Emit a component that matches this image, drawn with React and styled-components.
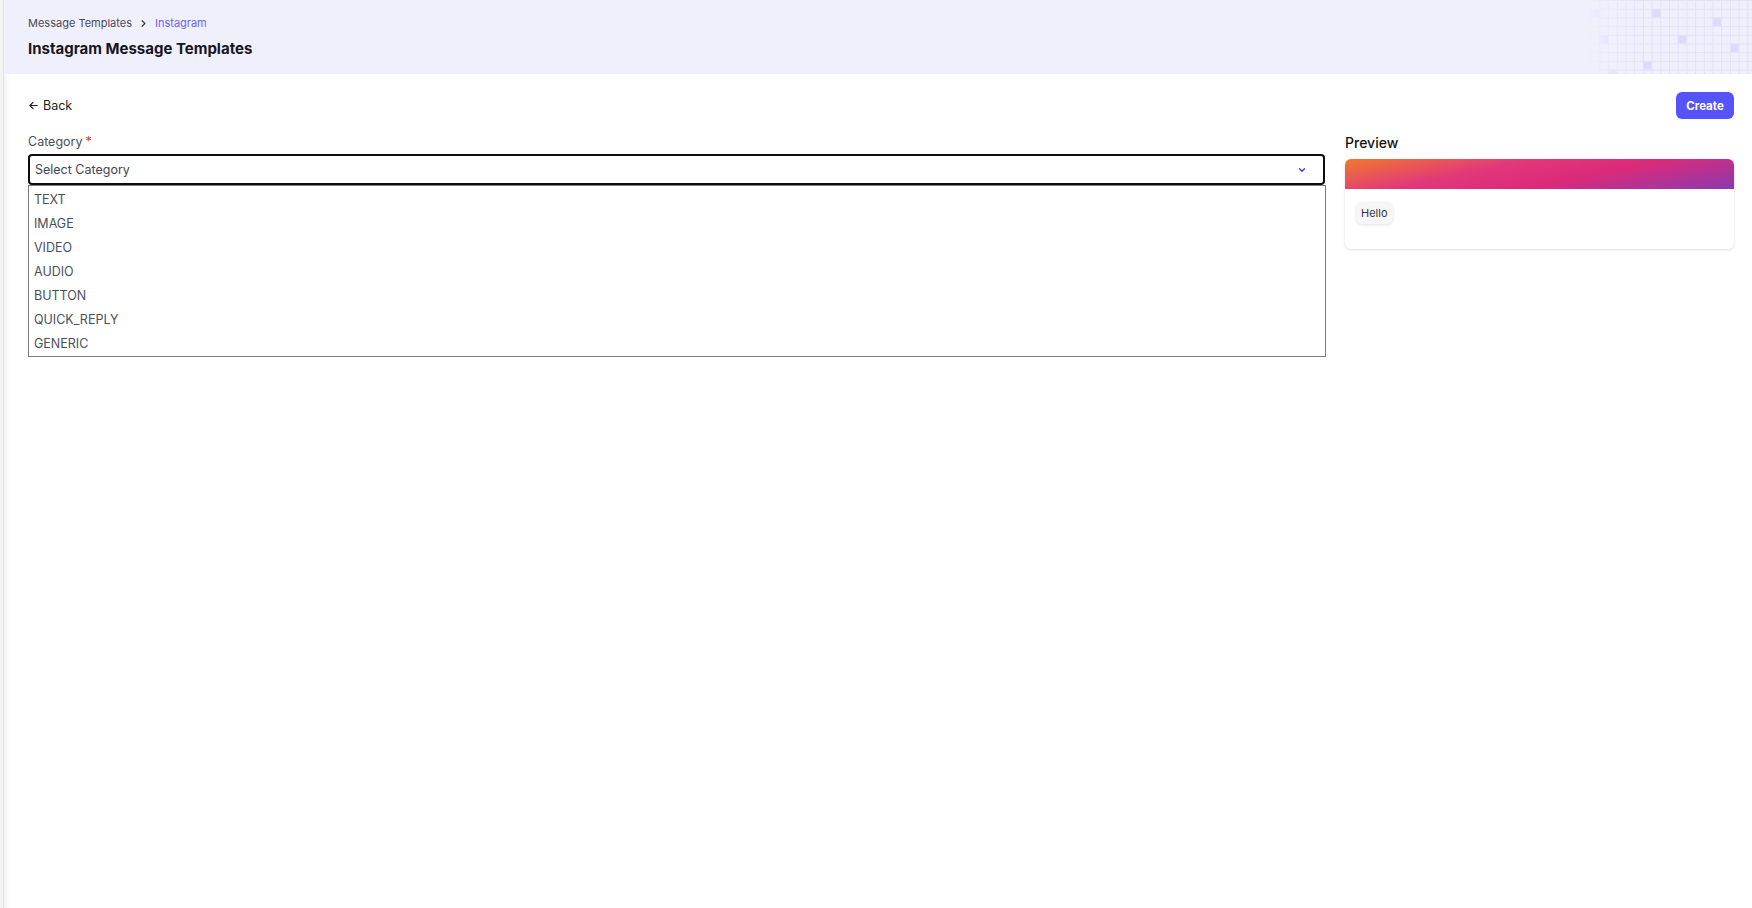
import React from "react";
import styled, { createGlobalStyle } from "styled-components";

const Global = createGlobalStyle`
  html, body { margin: 0; padding: 0; background: #ffffff; }
  body { font-family: Inter, "Noto Sans", "Liberation Sans", sans-serif; color: #1f2024; }
  * { box-sizing: border-box; }
`;

const Shell = styled.div`
  display: flex;
  min-height: 908px;
`;

const Rail = styled.div`
  width: 4px;
  flex: none;
  background: #f3f3f4;
  border-right: 1px solid #e4e4e6;
`;

const Main = styled.div`
  flex: 1;
  display: flex;
  flex-direction: column;
  background: #fff;
  box-shadow: inset 6px 0 6px -5px rgba(0, 0, 0, 0.08);
`;

const Header = styled.header`
  position: relative;
  height: 74px;
  background: #f0f0fd;
  padding: 16px 24px 0 24px;
  overflow: hidden;
`;

const Crumbs = styled.nav`
  display: flex;
  align-items: center;
  gap: 6px;
  font-size: 11px;
  line-height: 15px;
`;

const Crumb = styled.span`
  color: ${(p) => (p.$active ? "#6c63f6" : "#4a4a55")};
`;

const Title = styled.h1`
  margin: 8px 0 0;
  font-size: 15px;
  line-height: 20px;
  font-weight: 700;
  color: #16161f;
`;

const GridArt = styled.svg`
  position: absolute;
  right: 0;
  top: 0;
  -webkit-mask-image: linear-gradient(to right, transparent 0%, #000 35%);
  mask-image: linear-gradient(to right, transparent 0%, #000 35%);
`;

const Content = styled.div`
  padding: 18px 18px 0 24px;
`;

const TopRow = styled.div`
  display: flex;
  align-items: center;
  justify-content: space-between;
  height: 27px;
`;

const BackLink = styled.a`
  display: flex;
  align-items: center;
  gap: 4px;
  font-size: 12.5px;
  color: #1c1c22;
  text-decoration: none;
  cursor: pointer;
`;

const PrimaryButton = styled.button`
  height: 27px;
  width: 58px;
  border: none;
  border-radius: 6px;
  background: #5653fb;
  color: #fff;
  font-family: inherit;
  font-size: 11.5px;
  font-weight: 700;
  cursor: pointer;
`;

const Columns = styled.div`
  display: grid;
  grid-template-columns: 1fr 389px;
  gap: 20px;
  margin-top: 14px;
  align-items: start;
`;

const Field = styled.div`
  display: flex;
  flex-direction: column;
`;

const Label = styled.label`
  font-size: 12.5px;
  line-height: 18px;
  color: #4d4d57;
  margin-bottom: 3px;
`;

const Required = styled.span`
  color: #e53935;
  margin-left: 3px;
`;

const SelectWrap = styled.div`
  position: relative;
`;

const SelectBox = styled.div`
  height: 31px;
  border: 2px solid #0d0d0f;
  border-radius: 4px;
  display: flex;
  align-items: center;
  justify-content: space-between;
  padding: 0 16px 0 5px;
  font-size: 12.5px;
  color: #45454f;
`;

const Menu = styled.ul`
  position: absolute;
  left: 0;
  right: -1px;
  top: 31px;
  margin: 0;
  padding: 2px 0 0;
  list-style: none;
  background: #fff;
  border: 1px solid #7a7a7e;
`;

const Option = styled.li`
  height: 24px;
  line-height: 24px;
  padding: 0 5px;
  font-size: 12.5px;
  color: #4a4f5c;
`;

const PreviewTitle = styled.h2`
  margin: 0;
  font-size: 14px;
  line-height: 20px;
  font-weight: 500;
  color: #121216;
`;

const Card = styled.div`
  margin-top: 6px;
  height: 90px;
  border-radius: 6px;
  background: #fff;
  box-shadow: 0 1px 3px rgba(0, 0, 0, 0.12), 0 0 1px rgba(0, 0, 0, 0.08);
  overflow: hidden;
`;

const CardBand = styled.div`
  height: 30px;
  background: linear-gradient(168deg, #f27a2c 0%, #e2387a 35%, #dc2a79 60%, #8a3ab0 100%);
`;

const CardBody = styled.div`
  padding: 12px 11px;
`;

const Bubble = styled.span`
  display: inline-block;
  height: 22px;
  line-height: 22px;
  padding: 0 5px;
  border-radius: 6px;
  background: #f6f6f7;
  font-size: 11px;
  color: #33343d;
  box-shadow: 0 1px 3px rgba(0, 0, 0, 0.12);
`;

const options = ["TEXT", "IMAGE", "VIDEO", "AUDIO", "BUTTON", "QUICK_REPLY", "GENERIC"];

const CELL = 8.7;
const squares = [
  [1, 1], [8, 1], [15, 2], [2, 4], [11, 4], [17, 5], [7, 7], [3, 8],
];

function HeaderGrid() {
  const w = 170;
  const h = 74;
  const v = [];
  for (let i = 0; i * CELL <= w; i++) v.push(i * CELL);
  const hz = [];
  for (let j = 0; j * CELL <= h; j++) hz.push(j * CELL);
  return (
    <GridArt width={w} height={h} viewBox={`0 0 ${w} ${h}`}>
      {squares.map(([c, r], k) => (
        <rect key={k} x={c * CELL} y={r * CELL} width={CELL} height={CELL} fill="#dcdcfa" />
      ))}
      {v.map((x, k) => (
        <line key={"v" + k} x1={x + 0.5} y1={0} x2={x + 0.5} y2={h} stroke="#e1e1f8" strokeWidth="1" />
      ))}
      {hz.map((y, k) => (
        <line key={"h" + k} x1={0} y1={y + 0.5} x2={w} y2={y + 0.5} stroke="#e1e1f8" strokeWidth="1" />
      ))}
    </GridArt>
  );
}

export default function App() {
  return (
    <>
      <Global />
      <Shell>
        <Rail />
        <Main>
          <Header>
            <Crumbs>
              <Crumb>Message Templates</Crumb>
              <svg width="11" height="11" viewBox="0 0 24 24" fill="none" stroke="#3a3a44" strokeWidth="2.6" strokeLinecap="round" strokeLinejoin="round">
                <path d="M9 6l6 6-6 6" />
              </svg>
              <Crumb $active>Instagram</Crumb>
            </Crumbs>
            <Title>Instagram Message Templates</Title>
            <HeaderGrid />
          </Header>
          <Content>
            <TopRow>
              <BackLink>
                <svg width="11" height="11" viewBox="0 0 24 24" fill="none" stroke="#1c1c22" strokeWidth="2.4" strokeLinecap="round" strokeLinejoin="round">
                  <path d="M20 12H4M11 5l-7 7 7 7" />
                </svg>
                Back
              </BackLink>
              <PrimaryButton>Create</PrimaryButton>
            </TopRow>
            <Columns>
              <Field>
                <Label>
                  Category<Required>*</Required>
                </Label>
                <SelectWrap>
                  <SelectBox>
                    Select Category
                    <svg width="10" height="10" viewBox="0 0 24 24" fill="none" stroke="#3b36f0" strokeWidth="3" strokeLinecap="round" strokeLinejoin="round">
                      <path d="M6 9l6 6 6-6" />
                    </svg>
                  </SelectBox>
                  <Menu>
                    {options.map((o) => (
                      <Option key={o}>{o}</Option>
                    ))}
                  </Menu>
                </SelectWrap>
              </Field>
              <div>
                <PreviewTitle>Preview</PreviewTitle>
                <Card>
                  <CardBand />
                  <CardBody>
                    <Bubble>Hello</Bubble>
                  </CardBody>
                </Card>
              </div>
            </Columns>
          </Content>
        </Main>
      </Shell>
    </>
  );
}
